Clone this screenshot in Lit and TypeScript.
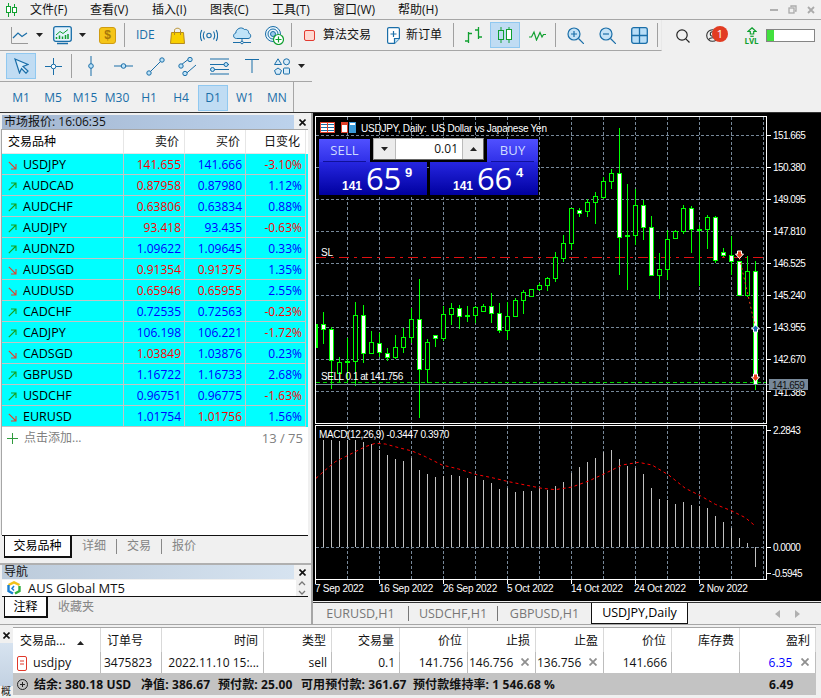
import { LitElement, html, svg, css } from "lit";
import { customElement } from "lit/decorators.js";

const B = "#1a6ea8";
const G = "#10a030";
const caret = html`<svg width="7" height="4" viewBox="0 0 7 4"><path d="M0 0H7L3.5 4Z" fill="#222"/></svg>`;

const I = {
  app: html`<svg width="13" height="14" viewBox="0 0 13 14" fill="none" stroke="#10a030"><path d="M3.5 0V14M9.5 1V13"/><rect x="1.5" y="3.5" width="4" height="6" fill="#fff"/><rect x="7.5" y="4.5" width="4" height="5" fill="#fff"/></svg>`,
  line: html`<svg width="17" height="17" viewBox="0 0 17 17" fill="none"><path d="M.5 0V16.5H17" stroke="#999"/><path d="M2 11L7 6L11 9.500L16 6" stroke="${B}" stroke-width="1.200"/></svg>`,
  monitor: html`<svg width="19" height="19" viewBox="0 0 19 19" fill="none"><rect x=".7" y=".7" width="17.600" height="14.600" rx="2" fill="#e4f3fc" stroke="${B}" stroke-width="1.300"/><path d="M3 9L7 5.500L10 7.500L15 3.500" stroke="${G}"/><path d="M3.500 13V11M6.500 13V9.500M9.500 13V10.500M12.500 13V9M15 13V8" stroke="${G}" stroke-width="1.500"/><path d="M4 17.500H15" stroke="${B}" stroke-width="1.500"/></svg>`,
  dollar: html`<div class="dollar">$</div>`,
  bag: html`<svg width="15" height="17" viewBox="0 0 15 17" fill="none"><path d="M1.500 5.500H13.500L14.500 16.500H.5Z" fill="#f8cf00" stroke="#b58a1e"/><path d="M4.500 8V3.500C4.500 .5 10.500 .5 10.500 3.500V8" stroke="#b58a1e"/></svg>`,
  signal: html`<svg width="18" height="13" viewBox="0 0 18 13" fill="none" stroke="${B}" stroke-width="1.100"><circle cx="9" cy="6.500" r="2.200"/><path d="M4.500 2.500C3 5 3 8 4.500 10.500M13.500 2.500C15 5 15 8 13.500 10.500M1.800 1C0 4.500 0 8.500 1.800 12M16.200 1C18 4.500 18 8.500 16.200 12"/></svg>`,
  cloud: html`<svg width="20" height="19" viewBox="0 0 20 19" fill="none" stroke="${B}"><path d="M4.500 12.500C1 12.500 .5 8 3.800 7C4 3 9 0 12.500 3.500C16 3 17 6 16.500 7C19.500 8 19.500 12.500 16 12.500Z" fill="#bfe3f8"/><path d="M10 12.500V16M1 16.500H19"/><circle cx="10" cy="16.500" r="1.300" fill="#fff"/></svg>`,
  globe: html`<svg width="19" height="19" viewBox="0 0 19 19" fill="none" stroke="${B}"><circle cx="8" cy="8" r="7.500" fill="#e8f4fb"/><circle cx="8" cy="8" r="5"/><circle cx="8" cy="8" r="2.500" fill="#9ccbe8"/><circle cx="13.500" cy="13.500" r="5" fill="#fff" stroke="${G}" stroke-width="1.200"/><path d="M13.500 10.500V16.500M10.500 13.500H16.500" stroke="${G}" stroke-width="1.200"/></svg>`,
  red: html`<svg width="11" height="11" viewBox="0 0 11 11"><rect x=".5" y=".5" width="10" height="10" rx="1.500" fill="#ffd9d2" stroke="#e23a30"/></svg>`,
  doc: html`<svg width="13" height="17" viewBox="0 0 13 17" fill="none" stroke="${B}" stroke-width="1.200"><path d="M2 .6H11A1.400 1.400 0 0 1 12.400 2V11.500L7.500 16.400H2A1.400 1.400 0 0 1 .6 15V2A1.400 1.400 0 0 1 2 .6Z" fill="#fff"/><path d="M12.400 11.500H7.500V16.400" fill="#bfe3f8"/><path d="M6.500 4V10M3.500 7H9.500"/></svg>`,
  bars: html`<svg width="18" height="17" viewBox="0 0 18 17" fill="none" stroke="${G}" stroke-width="1.300"><path d="M3.500 5V16M0 14H3.500M3.500 6.500H7M13.500 0V12M10 3H13.500M13.500 10H17"/></svg>`,
  candles: html`<svg width="14" height="16" viewBox="0 0 14 16" fill="none" stroke="${G}"><path d="M3 0V16M11 0V16"/><rect x=".5" y="3.500" width="5" height="9" fill="#c0dcf3"/><rect x="8.500" y="2.500" width="5" height="10" fill="#fff"/></svg>`,
  zig: html`<svg width="17" height="11" viewBox="0 0 17 11" fill="none" stroke="${G}" stroke-width="1.200"><path d="M0 7H2.500L5 2L7.500 10L11 2.500L13 7L14.500 4.500H17"/></svg>`,
  zin: html`<svg width="17" height="17" viewBox="0 0 17 17" fill="none" stroke="${B}" stroke-width="1.200"><circle cx="7" cy="7" r="6" fill="#c4e2f6"/><path d="M11.500 11.500L17 17" /><path d="M7 4V10M4 7H10"/></svg>`,
  zout: html`<svg width="17" height="17" viewBox="0 0 17 17" fill="none" stroke="${B}" stroke-width="1.200"><circle cx="7" cy="7" r="6" fill="#c4e2f6"/><path d="M11.500 11.500L17 17"/><path d="M4 7H10"/></svg>`,
  grid: html`<svg width="17" height="17" viewBox="0 0 17 17" fill="#b9def7" stroke="${B}" stroke-width="1.300"><rect x=".7" y=".7" width="15.600" height="15.600" rx="2"/><path d="M8.500 1V16M1 8.500H16"/></svg>`,
  search: html`<svg width="14" height="14" viewBox="0 0 14 14" fill="none" stroke="#222" stroke-width="1.200"><circle cx="6" cy="6" r="5.200"/><path d="M9.800 9.800L13.500 13.500"/></svg>`,
  person: html`<svg width="13" height="13" viewBox="0 0 13 13" fill="none" stroke="#333" stroke-width="1.100"><circle cx="6.500" cy="6.500" r="5.800"/><circle cx="6.500" cy="5" r="2.200"/><path d="M2.500 10.800C4 8 9 8 10.500 10.800"/></svg>`,
  lvlUp: html`<svg width="10" height="10" viewBox="0 0 10 10" fill="none" stroke="#10a030" stroke-width="1.200"><path d="M5 .8L9 4.500H6.700V7H3.300V4.500H1Z"/><path d="M3.300 9.300H6.700"/></svg>`,
  cursor: html`<svg width="15" height="16" viewBox="0 0 15 16" fill="#d7ecfa" stroke="${B}" stroke-width="1.200"><path d="M1 1L14 6.500L9 8.500L14 13L12 15.200L7.500 10.500L5.500 15Z"/></svg>`,
  cross: html`<svg width="17" height="17" viewBox="0 0 17 17" fill="#fff" stroke="${B}"><path d="M8.500 0V17M0 8.500H17"/><circle cx="8.500" cy="8.500" r="2.300"/></svg>`,
  vline: html`<svg width="6" height="20" viewBox="0 0 6 20" fill="#bfe3f8" stroke="${B}"><path d="M3 0V20"/><circle cx="3" cy="10" r="2.300"/></svg>`,
  hline: html`<svg width="19" height="6" viewBox="0 0 19 6" fill="#bfe3f8" stroke="${B}"><path d="M0 3H19"/><circle cx="9.500" cy="3" r="2.300"/></svg>`,
  trend: html`<svg width="19" height="19" viewBox="0 0 19 19" fill="#bfe3f8" stroke="${B}"><path d="M3 16L16 3"/><circle cx="3" cy="16" r="2.200"/><circle cx="16" cy="3" r="2.200"/></svg>`,
  chan: html`<svg width="19" height="19" viewBox="0 0 19 19" fill="#bfe3f8" stroke="${B}"><path d="M3 8L12 1M7 17.500L18 8"/><circle cx="3" cy="9" r="2.200"/><circle cx="12" cy="2.500" r="2.200"/><circle cx="7" cy="16.500" r="2.200"/></svg>`,
  fib: html`<svg width="19" height="17" viewBox="0 0 19 17" fill="#bfe3f8" stroke="${B}"><path d="M0 1H19M0 6.500H19M0 11.500H19M0 16H19" stroke-width="1.100"/><circle cx="16" cy="6.500" r="2"/><circle cx="2.500" cy="11.500" r="2"/></svg>`,
  tline: html`<svg width="14" height="14" viewBox="0 0 14 14" fill="none" stroke="${B}"><path d="M0 .5H14M7 .5V14"/></svg>`,
  shapes: html`<svg width="18" height="17" viewBox="0 0 18 17" fill="#d7ecfa" stroke="${B}"><path d="M5 .8L8.500 6.500H1.500Z"/><circle cx="13.500" cy="3.800" r="3"/><path d="M5 10L8.500 12.500L7 16.300H3L1.500 12.500Z"/><rect x="10.500" y="10" width="6" height="6" rx="1"/></svg>`,
  x: html`<svg width="7" height="7" viewBox="0 0 7 7" stroke="#111" stroke-width="1.600"><path d="M.5 .5L6.500 6.500M6.500 .5L.5 6.500"/></svg>`,
  xg: html`<svg width="8" height="8" viewBox="0 0 8 8" stroke="#8f8f8f" stroke-width="1.800"><path d="M.5 .5L7.500 7.500M7.500 .5L.5 7.500"/></svg>`,
  logo: html`<svg width="14" height="14" viewBox="0 0 14 14" fill="none" stroke-width="2.400"><path d="M1.500 4L7 1.300L12.500 4" stroke="#f2c21a"/><path d="M1.500 4V10L6 12.500" stroke="#1b7fd0"/><path d="M12.500 5V10L8 12.500" stroke="#30b040"/><path d="M7 5L5 7.500L7 9.500" stroke="#1b7fd0" stroke-width="1.500"/></svg>`,
  doc2: html`<svg width="10" height="15" viewBox="0 0 10 15" fill="#fff" stroke="#e0392b"><rect x=".5" y=".5" width="9" height="14" rx="1.500"/><path d="M3 5H7M3 8H7"/></svg>`,
  plus: html`<svg width="11" height="11" viewBox="0 0 11 11" stroke="#2f9a3c"><path d="M5.500 0V11M0 5.500H11"/></svg>`,
  circlePlus: html`<svg width="11" height="11" viewBox="0 0 11 11" fill="none" stroke="#222"><circle cx="5.500" cy="5.500" r="5"/><path d="M5.500 3V8M3 5.500H8"/></svg>`,
  dn: html`<svg width="9" height="9" viewBox="0 0 9 9" fill="none" stroke="#e2412e" stroke-width="1.100"><path d="M.8 .8L8 8M8 3V8H3"/></svg>`,
  up: html`<svg width="9" height="9" viewBox="0 0 9 9" fill="none" stroke="#14a01e" stroke-width="1.100"><path d="M.8 8.200L8 1M3 1H8V6"/></svg>`,
};

type Q = [string, boolean, string, string, string, string, string, string];
const R = "r", L = "b";
const quotes: Q[] = [
  ["USDJPY", false, "141.655", R, "141.666", L, "-3.10%", R],
  ["AUDCAD", true, "0.87958", R, "0.87980", L, "1.12%", L],
  ["AUDCHF", true, "0.63806", R, "0.63834", L, "0.88%", L],
  ["AUDJPY", true, "93.418", R, "93.435", L, "-0.63%", R],
  ["AUDNZD", true, "1.09622", L, "1.09645", L, "0.33%", L],
  ["AUDSGD", false, "0.91354", R, "0.91375", R, "1.35%", L],
  ["AUDUSD", false, "0.65946", R, "0.65955", R, "2.55%", L],
  ["CADCHF", true, "0.72535", L, "0.72563", L, "-0.23%", R],
  ["CADJPY", true, "106.198", L, "106.221", L, "-1.72%", R],
  ["CADSGD", false, "1.03849", R, "1.03876", L, "0.23%", L],
  ["GBPUSD", true, "1.16722", L, "1.16733", L, "2.68%", L],
  ["USDCHF", true, "0.96751", L, "0.96775", L, "-1.63%", R],
  ["EURUSD", false, "1.01754", L, "1.01756", R, "1.56%", L],
];

// wick top, wick bottom, body top, body bottom, filled
const candles: [number, number, number, number, number][] = [
  [320,352,324,347,0],[312,344,324,329,1],[327,389,329,360,1],[357,383,362,373,0],[338,382,361,362,1],
  [302,386,315,361,0],[305,363,315,353,1],[331,353,342,353,0],[333,357,343,352,1],[348,361,353,357,1],
  [335,359,347,357,0],[328,353,337,347,0],[308,343,319,337,0],[279,418,319,369,1],[339,383,342,369,0],
  [335,347,335,338,1],[306,341,314,338,0],[303,325,308,314,0],[305,329,308,316,1],[306,322,315,316,1],
  [306,323,307,315,0],[304,311,306,311,0],[293,323,306,313,1],[303,333,313,330,1],[302,340,316,330,0],
  [298,317,300,316,0],[290,314,292,300,0],[289,296,289,296,0],[283,291,285,289,0],[277,291,278,285,0],
  [252,282,257,278,0],[235,262,243,258,0],[208,250,208,243,0],[208,217,210,213,1],[199,217,202,211,0],
  [192,224,196,202,0],[177,199,181,197,0],[169,189,173,181,0],[128,275,173,237,1],[184,290,235,236,1],
  [189,245,205,235,0],[200,240,205,227,1],[216,275,227,275,1],[253,299,269,275,0],[230,280,239,269,0],
  [230,239,231,238,0],[205,234,208,231,0],[206,253,208,229,1],[225,286,229,230,1],[215,249,217,229,0],
  [216,263,217,260,1],[248,257,252,255,1],[236,275,255,261,1],[261,296,261,295,1],[256,297,271,295,0],
  [261,390,271,384,1],
];
const macd = [45,45,48,45,45,50,58,75,90,101,108,100,135,147,155,153,150,152,158,153,165,174,191,190,201,198,197,190,195,183,171,143,125,110,98,82,75,101,122,128,147,189,222,226,236,232,240,244,249,273,291,308,338,354,425];
const signal = [[12,160],[40,135],[70,110],[100,95],[130,80],[160,65],[190,55],[220,57],[260,68],[300,78],[340,95],[390,120],[440,132],[490,148],[540,158],[590,170],[640,180],[690,190],[730,194],[780,186],[830,168],[880,145],[930,120],[980,112],[1020,120],[1070,150],[1120,190],[1165,212],[1210,238],[1260,258],[1300,278],[1330,303]];
const priceAxis = ["151.665","150.380","149.095","147.810","146.525","145.240","143.955","142.670","141.385"];
const times: [number, string][] = [[315,"7 Sep 2022"],[379,"16 Sep 2022"],[443,"26 Sep 2022"],[507,"5 Oct 2022"],[571,"14 Oct 2022"],[634,"24 Oct 2022"],[699,"2 Nov 2022"]];
const vx = [0,1,2,3,4,5,6,7,8,9,10,11,12,13].map((k) => 347.5 + 32 * k);

const chart = () => svg`
  <g shape-rendering="crispEdges">
    <g stroke="#778899" stroke-dasharray="3 2" fill="none">
      ${vx.map((x) => svg`<path d="M${x} 117V423M${x} 426V579"/>`)}
      ${[135,167,199,231,263,295,327,359,391].map((y) => svg`<path d="M316 ${y + 0.5}H766"/>`)}
      <path d="M316 547.500H766"/>
    </g>
    <path d="M316 257.500H766" stroke="#e01010" stroke-dasharray="10 5 3 5" fill="none"/>
    ${candles.map(([wt, wb, bt, bb, f], i) => {
      const c = 315.5 + 8 * i;
      const left = Math.max(c - 2, 316);
      return svg`<path d="M${c} ${wt}V${wb}" stroke="#00ff00"/>
        <rect x="${left}" y="${bt + 0.5}" width="${c + 2 - left}" height="${bb - bt}" fill="${f ? "#fff" : "#000"}" stroke="#00ff00"/>`;
    })}
    ${macd.map((t, i) => {
      const x = 323.5 + 8 * i;
      const y = 425 + t / 3;
      return svg`<path d="M${x} ${y}V547" stroke="#c0c0c0"/>`;
    })}
    <path d="M316 382.500H766" stroke="#00d800" stroke-dasharray="4 3" fill="none"/>
    <path d="M316 384.500H769" stroke="#778899" fill="none"/>
    <rect x="315.500" y="116.500" width="451" height="307" fill="none" stroke="#fff"/>
    <rect x="315.500" y="425.500" width="451" height="154" fill="none" stroke="#fff"/>
    ${[135,167,199,231,263,295,327,359,391,430,547,573].map((y) => svg`<path d="M767 ${y + 0.5}H771" stroke="#fff"/>`)}
    ${[315.5,379.5,443.5,507.5,571.5,635.5,699.5].map((x) => svg`<path d="M${x} 580V584" stroke="#fff"/>`)}
  </g>
  <polyline fill="none" stroke="#ff0000" stroke-width="1" stroke-dasharray="3 3" points="${signal.map(([x, y]) => `${312 + x / 3},${425 + y / 3}`).join(" ")}"/>
  <path d="M739.500 258L755.500 328" stroke="#e8401c" stroke-dasharray="2 3" fill="none"/>
  <path d="M735.500 254H737.500V251H741.500V254H743.500L739.500 258.500Z" fill="#e8401c" stroke="#fff"/>
  <path d="M755.500 325L759.500 329H757.500V332H753.500V329H751.500Z" fill="#1a6ab0" stroke="#fff"/>
  <path d="M751.500 377H753.500V374H757.500V377H759.500L755.500 381.500Z" fill="#e8401c" stroke="#fff"/>
  ${priceAxis.slice(0, 8).map((t, i) => svg`<text class="ax pa" x="773" y="${139 + 32 * i}">${t}</text>`)}
  <text class="ax pa" x="773" y="396">${priceAxis[8]}</text>
  <rect x="769" y="379" width="39" height="11" fill="#778899" shape-rendering="crispEdges"/>
  <text class="ax pa bid" x="772" y="389">141.659</text>
  <text class="ax pa" x="773" y="434">2.2843</text>
  <text class="ax pa" x="773" y="551">0.0000</text>
  <text class="ax pa" x="772" y="577">-0.5945</text>
  ${times.map(([x, t]) => svg`<text class="ax" x="${x}" y="592">${t}</text>`)}
  <text class="ax tt" x="361" y="131.500" textLength="186" lengthAdjust="spacing">USDJPY, Daily:  US Dollar vs Japanese Yen</text>
  <text class="ax" x="321" y="256">SL</text>
  <text class="ax" x="321" y="380" textLength="82" lengthAdjust="spacing">SELL 0.1 at 141.756</text>
  <text class="ax" x="319" y="438" textLength="130" lengthAdjust="spacing">MACD(12,26,9) -0.3447 0.3970</text>
  <g shape-rendering="crispEdges">
    <rect x="320.500" y="122.500" width="14" height="10" fill="#fff" stroke="#e0402a"/>
    <path d="M321 124.500H334M321 127.500H334M321 130.500H334" stroke="#1a6ea8"/>
    <path d="M327.500 122V133" stroke="#e0402a"/>
    <rect x="341.500" y="122.500" width="6" height="10" fill="#fff" stroke="#e0402a"/>
    <rect x="349.500" y="122.500" width="6" height="10" fill="#fff" stroke="#3a9ad8"/>
    <rect x="349" y="125" width="7" height="8" fill="#3a9ad8"/>
    <rect x="341" y="122" width="7" height="3" fill="#e0402a"/>
  </g>
`;

@customElement("app-root")
export class AppRoot extends LitElement {
  static styles = css`
    :host {
      display: block;
      width: 821px;
      height: 698px;
      overflow: hidden;
      background: #f0f0f0;
      color: #111;
      font: 12px/16px "Open Sans", "Noto Sans CJK SC", sans-serif;
    }
    * { box-sizing: border-box; }
    i { display: block; }
    .c { display: flex; align-items: center; justify-content: center; }

    .menu {
      height: 20px;
      border-bottom: 1px solid #a6a6a6;
      display: grid;
      grid-template-columns: 5px 13px 12px 60px 62px 58px 62px 61px 65px 1fr 19px 19px 17px 2px;
      align-items: center;
    }
    .winb { color: #aaa; }

    .row1 { display: flex; height: 31px; }
    .tb1, .tb2 { display: grid; align-items: center; height: 31px; border-bottom: 1px solid #a6a6a6; }
    .tb1 {
      width: 662px;
      grid-template-columns: 11px 17px 8px 7px 10px 19px 7px 7px 13px 17px 8px 1px 11px 18px 16px 15px 15px 18px 14px 20px 13px 19px 7px 1px 12px 11px 8px 49px 15px 13px 6px 38px 9px 1px 11px 18px 7px 30px 9px 17px 9px 1px 11px 17px 15px 17px 15px 17px 9px 1px 4px;
      border-right: 1px solid #e8e8e8;
    }
    .sep { height: 24px; width: 1px; background: #a0a0a0; }
    .dollar {
      width: 17px; height: 17px; border-radius: 3px;
      background: #f5c518; border: 1px solid #d09c10;
      color: #a8780a; font: bold 12px/15px "Liberation Sans", sans-serif; text-align: center;
    }
    .ide { color: #1a6ea8; font-size: 12px; }
    .active {
      height: 26px; background: #c0dcf3; border: 1px solid #90c8f0;
      display: flex; align-items: center; justify-content: center;
    }
    .right {
      display: grid; flex: 1; align-items: center;
      grid-template-columns: 14px 14px 16px 13px 26px 13px 8px 49px;
      position: relative;
    }
    .badge {
      position: absolute; left: 50px; top: 6px;
      width: 16px; height: 16px; border-radius: 50%;
      background: #e23c22; color: #fff; font-size: 11px; line-height: 16px; text-align: center;
    }
    .lvl { display: flex; flex-direction: column; align-items: center; color: #10a030; font: bold 8px/8px "Open Sans", sans-serif; }
    .prog { height: 13px; border: 1px solid #858585; background: #fff; }
    .prog div { width: 7px; height: 100%; background: #42e03e; }

    .tb2 {
      width: 312px;
      grid-template-columns: 6px 30px 9px 17px 9px 1px 10px 18px 14px 19px 13px 19px 13px 19px 13px 19px 14px 17px 13px 18px 7px 7px 6px;
    }
    .tb3 {
      height: 31px; width: 294px; padding-left: 5px; padding-right: 1px;
      border-right: 1px solid #a6a6a6;
      display: grid; grid-template-columns: repeat(9, 32px); align-items: center;
    }
    .tf { height: 26px; width: 30px; margin-left: 1px; display: flex; align-items: center; justify-content: center; color: #1a6ea8; border: 1px solid transparent; }
    .tf.on { background: #c0dcf3; border-color: #90c8f0; }

    .main { display: flex; height: 512px; border-top: 1px solid #333; margin-top: -1px; }
    .left { width: 313px; border-right: 2px solid #a6a6a6; display: flex; flex-direction: column; }
    .cap {
      margin: 2px 0 0 2px; display: grid; grid-template-columns: 292px 16px; align-items: center; height: 14px;
    }
    .cap > div:first-child { height: 14px; padding-left: 2px; line-height: 13px; background: linear-gradient(90deg, #a3b6d0, #bcd2ec); white-space: pre; }
    .cap.nav { margin-top: 0; }
    .cap.nav > div:first-child { background: linear-gradient(90deg, #bccbdb, #d6e3f0); }
    .mw {
      margin: 0 0 0 1px; width: 307px; height: 406px; background: #fff;
      border-left: 1px solid #a6a6a6; border-top: 1px solid #a6a6a6;
      display: flex; flex-direction: column;
    }
    .qr { display: grid; grid-template-columns: 122px 61px 61px 60px; height: 21px; line-height: 18px; }
    .qr.head { height: 24px; line-height: 22px; }
    .qr > div { border-right: 1px solid #c4c4c4; border-bottom: 1px solid #c4c4c4; text-align: right; padding: 2px 3px 0 0; }
    .qr.head > div { border-color: #e6e6e6; padding: 1px 5px 0 0; }
    .qr.body { background: #00ffff; }
    .qr > div.sym { text-align: left; padding: 2px 0 0 6px; display: flex; align-items: center; gap: 6px; color: #000; }
    .qr.head > div.sym { padding: 1px 0 0 6px; }
    .qr.body > div.sym { font-size: 12.500px; }
    .r { color: #ff0000; }
    .b { color: #0000ff; }
    .add { display: flex; height: 22px; align-items: center; padding: 0 5px 0 5px; color: #808080; gap: 6px; }
    .add span:last-child { margin-left: auto; font-size: 13px; }

    .tabs { display: flex; border-top: 1px solid #111; background: #f0f0f0; margin-left: 2px; width: 306px; }
    .tabs.t1 { height: 24px; }
    .tabs.t2 { height: 24px; }
    .tab { color: #858585; display: flex; align-items: center; height: 20px; }
    .tab.on { color: #000; background: #fff; border: 1px solid #111; border-width: 0 2px 2px 1px; height: 22px; margin-left: 2px; justify-content: center; }
    .t1 .on { width: 68px; }
    .t2 .on { width: 44px; height: 21px; }
    .t1 .tab:not(.on) { padding: 0 10px; }
    .bar { width: 1px; height: 15px; background: #888; align-self: center; margin-top: -3px; }
    .t2 .tab:not(.on) { padding-left: 10px; }
    .divider { height: 2px; margin-top: 4px; background: #b0b0b0; width: 311px; }
    .navc { margin: 1px 0 0 2px; width: 306px; height: 16px; background: #fff; display: flex; align-items: center; overflow: hidden; }
    .navc span { font-size: 13px; line-height: 15px; margin-left: 7px; flex: 1; padding-top: 1px; }
    .navs { width: 12px; height: 16px; background: #f0f0f0; color: #666; }
    .navlogo { margin-left: 5px; display: flex; }

    .right-col { flex: 1; display: flex; flex-direction: column; }
    .chart { position: relative; height: 488px; background: #000; }
    .chart svg { display: block; }
    .ax { font: 10px "Liberation Sans", sans-serif; fill: #fff; letter-spacing: -0.25px; }
    .pa { letter-spacing: -0.55px; }
    .bid { fill: #111; }
    .tt { letter-spacing: 0; white-space: pre; }

    .panel { position: absolute; left: 6px; top: 25px; width: 219px; height: 57px; display: grid; grid-template-columns: 108px 3px 108px; grid-template-rows: 24px 33px; }
    .top { grid-column: 1 / 4; display: grid; grid-template-columns: 51px 3px 111px 3px 51px; }
    .btn {
      height: 23px; margin-top: 1px; background: linear-gradient(#5050ff, #3030e8);
      color: #cfdcff; font-size: 13px; letter-spacing: .2px; line-height: 22px; text-align: center;
      position: relative;
    }
    .btn::after { content: ""; position: absolute; left: 4px; right: 4px; bottom: 0; height: 1px; background: #10109a; }
    .spin { height: 22px; display: grid; grid-template-columns: 22px 1fr 21px; background: #e8e8e8; border: 1px solid #aaa; border-right-color: #666; border-bottom-color: #666; }
    .spin div:nth-child(2) { background: #fff; text-align: right; padding-right: 4px; line-height: 20px; font-size: 12px; color: #111; }
    .spinb { background: #ececec; border-right: 1px solid #bbb; }
    .spinb + div + .spinb { border-right: 0; border-left: 1px solid #bbb; }
    .price {
      background: linear-gradient(#2626e0, #0000a0); color: #fff;
      display: flex; align-items: flex-start; padding-left: 23px;
    }
    .p1 { font: bold 12px/12px "Liberation Sans", sans-serif; margin-top: 18px; width: 24px; }
    .p2 { font: 31px/32px "Open Sans", sans-serif; width: 39px; letter-spacing: -.3px; }
    .p3 { font: bold 13px/13px "Liberation Sans", sans-serif; margin-top: 4px; }

    .ctabs {
      flex: 1; display: grid; grid-template-columns: 95px 1px 88px 1px 93px 97px 1fr 18px 23px 12px;
      align-items: center; border-top: 1px solid #333; margin-top: 1px; height: 23px; font-size: 12.500px; line-height: 20px; color: #777;
    }
    .ctabs > div { text-align: center; }
    .ctabs .bar2 { width: 1px; height: 15px; background: #777; }
    .ctabs .on { background: #fff; color: #000; border: 1px solid #111; border-width: 0 1px 1px 1px; height: 21px; line-height: 19px; align-self: start; }
    .arr { width: 0; height: 0; border: 4px solid transparent; justify-self: center; }
    .arr.l { border-right: 5px solid #b0b0b0; border-left: 0; }
    .arr.rr { border-left: 5px solid #b0b0b0; border-right: 0; }

    .box { display: flex; height: 73px; border-top: 1px solid #a6a6a6; }
    .strip { width: 13px; position: relative; display: flex; flex-direction: column; overflow: hidden; }
    .strip .xx { height: 15px; display: flex; align-items: center; justify-content: center; margin-top: 3px; }
    .strip .bg { flex: 1; background: linear-gradient(#d7e3f0, #c3d2e2); }
    .strip .gl { font-size: 10px; height: 11px; line-height: 11px; margin-left: 1px; }
    .tw { margin-top: 2px; width: 803px; border-top: 1px solid #a6a6a6; }
    .tr { display: grid; grid-template-columns: 88px 61px 102px 68px 68px 68px 68px 68px 68px 68px 76px; background: #fff; }
    .tr > div { border-right: 1px solid #d9d9d9; padding: 1px 5px 0; text-align: right; white-space: nowrap; position: relative; }
    .tr.h { height: 24px; line-height: 23px; }
    .tr.d { height: 21px; line-height: 20px; }
    .tr.d > div { border-right-color: #bdbdbd; padding-right: 4px; }
    .tr > div.l { text-align: left; display: flex; align-items: center; }
    .tr.h > div.l:first-child { padding-left: 7px; }
    .tr.h > div.l:nth-child(2) { padding-left: 6px; }
    .tr.d > div.l { padding-left: 3px; }
    .tr.d > div.l.tp { padding-left: 1px; }
    .tr.d > div.l:first-child { font-size: 12.500px; }
    .tr .ico { margin: 0 6px 0 1px; display: flex; }
    .sort { margin-left: auto; margin-right: 11px; }
    .xi { position: absolute; right: 6px; top: 6px; display: flex; }
    .sum {
      height: 22px; background: #c3c3c3; font-weight: 700; line-height: 21px; white-space: nowrap; padding-top: 1px; letter-spacing: .1px;
      display: grid; grid-template-columns: 21px 107px 77px 83px 112px 1fr 47px; align-items: center;
    }
    .sum div:first-child { display: flex; padding-left: 4px; }
  `;

  private cap(label: string, cls = "") {
    return html`<div class="cap ${cls}"><div>${label}</div><div class="c">${I.x}</div></div>`;
  }

  render() {
    return html`
      <div class="menu">
        <i></i><div class="c">${I.app}</div><i></i>
        <div>文件(F)</div><div>查看(V)</div><div>插入(I)</div><div>图表(C)</div><div>工具(T)</div><div>窗口(W)</div><div>帮助(H)</div>
        <div class="c winb"><svg width="8" height="2"><rect width="8" height="2" fill="#b0b0b0"/></svg></div>
        <div class="c"><svg width="9" height="9" viewBox="0 0 9 9" fill="none" stroke="#aaa" stroke-width="1.300"><rect x="1" y="3" width="5" height="5"/><path d="M3 2V1H8V6H7"/></svg></div>
        <div class="c"><svg width="8" height="8" viewBox="0 0 8 8" stroke="#aaa" stroke-width="1.800"><path d="M1 1L7 7M7 1L1 7"/></svg></div>
        <i></i>
      </div>
      <div class="row1">
        <div class="tb1">
          <i></i><div class="c">${I.line}</div><i></i><div class="c">${caret}</div><i></i>
          <div class="c">${I.monitor}</div><i></i><div class="c">${caret}</div><i></i>
          <div class="c">${I.dollar}</div><i></i><div class="sep"></div><i></i>
          <div class="ide">IDE</div><i></i><div class="c">${I.bag}</div><i></i>
          <div class="c">${I.signal}</div><i></i><div class="c">${I.cloud}</div><i></i>
          <div class="c">${I.globe}</div><i></i><div class="sep"></div><i></i>
          <div class="c">${I.red}</div><i></i><div>算法交易</div><i></i>
          <div class="c">${I.doc}</div><i></i><div>新订单</div><i></i>
          <div class="sep"></div><i></i><div class="c">${I.bars}</div><i></i>
          <div class="active">${I.candles}</div><i></i><div class="c">${I.zig}</div><i></i>
          <div class="sep"></div><i></i><div class="c">${I.zin}</div><i></i>
          <div class="c">${I.zout}</div><i></i><div class="c">${I.grid}</div><i></i>
          <div class="sep"></div><i></i>
        </div>
        <div class="right">
          <i></i><div class="c">${I.search}</div><i></i><div class="c">${I.person}</div><i></i>
          <div class="lvl">${I.lvlUp}<span>LVL</span></div><i></i>
          <div class="prog"><div></div></div>
          <div class="badge">1</div>
        </div>
      </div>
      <div class="tb2">
        <i></i><div class="active">${I.cursor}</div><i></i><div class="c">${I.cross}</div><i></i>
        <div class="sep"></div><i></i><div class="c">${I.vline}</div><i></i>
        <div class="c">${I.hline}</div><i></i><div class="c">${I.trend}</div><i></i>
        <div class="c">${I.chan}</div><i></i><div class="c">${I.fib}</div><i></i>
        <div class="c">${I.tline}</div><i></i><div class="c">${I.shapes}</div><i></i>
        <div class="c">${caret}</div><i></i>
      </div>
      <div class="tb3">
        ${["M1","M5","M15","M30","H1","H4","D1","W1","MN"].map((t) => html`<div class="tf ${t === "D1" ? "on" : ""}">${t}</div>`)}
      </div>
      <div class="main">
        <div class="left">
          ${this.cap("市场报价: 16:06:35")}
          <div class="mw">
            <div class="qr head">
              <div class="sym">交易品种</div><div>卖价</div><div>买价</div><div>日变化</div>
            </div>
            ${quotes.map((q) => html`
              <div class="qr body">
                <div class="sym">${q[1] ? I.up : I.dn}<span>${q[0]}</span></div>
                <div class="${q[3]}">${q[2]}</div>
                <div class="${q[5]}">${q[4]}</div>
                <div class="${q[7]}">${q[6]}</div>
              </div>`)}
            <div class="add"><span class="c">${I.plus}</span><span>点击添加...</span><span>13 / 75</span></div>
          </div>
          <div class="tabs t1">
            <div class="tab on">交易品种</div>
            <div class="tab">详细</div><div class="bar"></div>
            <div class="tab">交易</div><div class="bar"></div>
            <div class="tab">报价</div>
          </div>
          <div class="divider"></div>
          ${this.cap("导航", "nav")}
          <div class="navc">
            <div class="navlogo">${I.logo}</div><span>AUS Global MT5</span>
            <div class="navs c"><svg width="8" height="14" viewBox="0 0 8 14" fill="none" stroke="#777" stroke-width="1.300"><path d="M1 4L4 1L7 4M1 10L4 13L7 10"/></svg></div>
          </div>
          <div class="tabs t2">
            <div class="tab on">注释</div>
            <div class="tab">收藏夹</div>
          </div>
        </div>
        <div class="right-col">
          <div class="chart">
            <svg width="508" height="488" viewBox="313 113 508 488">${chart()}</svg>
            <div class="panel">
              <div class="top">
                <div class="btn">SELL</div><i></i>
                <div class="spin">
                  <div class="spinb c"><svg width="7" height="4"><path d="M0 0H7L3.500 4Z" fill="#222"/></svg></div>
                  <div>0.01</div>
                  <div class="spinb c"><svg width="7" height="4"><path d="M0 4H7L3.500 0Z" fill="#222"/></svg></div>
                </div>
                <i></i><div class="btn">BUY</div>
              </div>
              <div class="price"><div class="p1">141</div><div class="p2">65</div><div class="p3">9</div></div>
              <i></i>
              <div class="price"><div class="p1">141</div><div class="p2">66</div><div class="p3">4</div></div>
            </div>
          </div>
          <div class="ctabs">
            <div>EURUSD,H1</div><div class="bar2"></div>
            <div>USDCHF,H1</div><div class="bar2"></div>
            <div>GBPUSD,H1</div>
            <div class="on">USDJPY,Daily</div>
            <i></i><div class="arr l"></div><div class="arr rr"></div><i></i>
          </div>
        </div>
      </div>
      <div class="box">
        <div class="strip">
          <div class="xx">${I.x}</div>
          <div class="bg"></div>
          <div class="gl">概</div>
        </div>
        <div class="tw">
          <div class="tr h">
            <div class="l">交易品...<span class="sort"><svg width="7" height="4"><path d="M0 4H7L3.500 0Z" fill="#222"/></svg></span></div>
            <div class="l">订单号</div><div>时间</div><div>类型</div><div>交易量</div>
            <div>价位</div><div>止损</div><div>止盈</div><div>价位</div><div>库存费</div><div>盈利</div>
          </div>
          <div class="tr d">
            <div class="l"><span class="ico">${I.doc2}</span>usdjpy</div>
            <div class="l">3475823</div>
            <div>2022.11.10 15:...</div>
            <div>sell</div><div>0.1</div><div>141.756</div>
            <div class="l tp">146.756<span class="xi">${I.xg}</span></div>
            <div class="l tp">136.756<span class="xi">${I.xg}</span></div>
            <div>141.666</div><div></div>
            <div><span class="b">6.35</span>&nbsp;&nbsp;&nbsp;&nbsp;&nbsp;&nbsp;<span class="xi">${I.xg}</span></div>
          </div>
          <div class="sum">
            <div>${I.circlePlus}</div>
            <div>结余: 380.18 USD</div><div>净值: 386.67</div><div>预付款: 25.00</div><div>可用预付款: 361.67</div>
            <div>预付款维持率: 1 546.68 %</div><div>6.49</div>
          </div>
        </div>
      </div>
    `;
  }
}
